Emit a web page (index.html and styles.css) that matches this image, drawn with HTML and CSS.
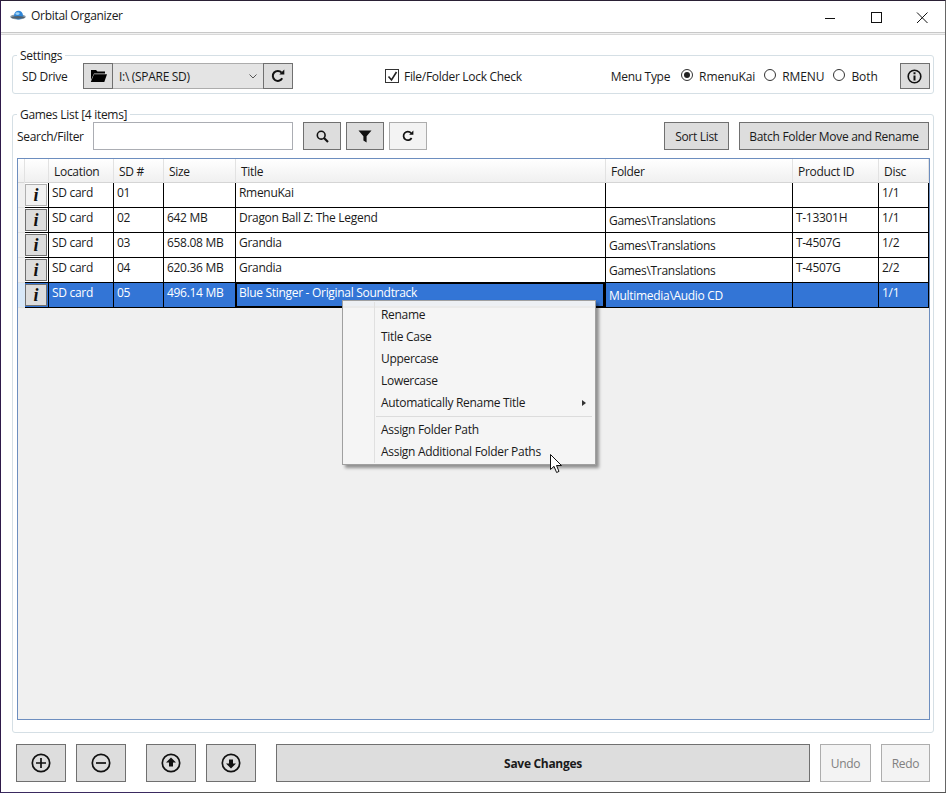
FILE: index.html
```html
<!DOCTYPE html>
<html lang="en">
<head>
<meta charset="utf-8">
<title>Orbital Organizer</title>
<link rel="stylesheet" href="styles.css">
</head>
<body>
<div class="window">
  <header class="titlebar">
    <svg class="app-icon" width="16" height="12" viewBox="0 0 16 12"><ellipse cx="8" cy="6.8" rx="7.8" ry="2.6" fill="#8a9aa8"/><circle cx="8.5" cy="5.2" r="4.4" fill="#2f86d8"/><ellipse cx="7.5" cy="3.6" rx="2.2" ry="1.3" fill="#9fd2f5"/><ellipse cx="8" cy="7.4" rx="6.8" ry="1.3" fill="#4f5f6c"/></svg>
    <span class="app-title">Orbital Organizer</span>
    <div class="caption">
      <svg width="46" height="30" viewBox="0 0 46 30"><path d="M18 16.5h10" stroke="#111" fill="none"/></svg>
      <svg width="46" height="30" viewBox="0 0 46 30"><rect x="18.5" y="10.5" width="10" height="10" stroke="#111" fill="none"/></svg>
      <svg width="46" height="30" viewBox="0 0 46 30"><path d="M18 10.5l10.5 10.5M28.5 10.5L18 21" stroke="#111" fill="none"/></svg>
    </div>
  </header>
  <div class="menu-rule"></div>

  <fieldset class="group settings">
    <legend>Settings</legend>
    <div class="settings-row">
      <span class="lbl drive-lbl">SD Drive</span>
      <button class="btn icon folder-btn"><svg width="17" height="12" viewBox="0 0 17 12"><path d="M1 0h5l1.5 1.5H15V3.5H4L1 10z" fill="#000"/><path d="M4 4.2H17L14.3 12H.8z" fill="#000"/></svg></button>
      <div class="combo"><span>I:\ (SPARE SD)</span><svg width="8" height="5" viewBox="0 0 8 5"><path d="M.5.5L4 4 7.5.5" stroke="#555" fill="none"/></svg></div>
      <button class="btn icon refresh-btn"><svg class="ico-refresh" width="14" height="14" viewBox="0 0 14 14"><path d="M11.2 9.3A5 5 0 1 1 10.6 3.6" stroke="#111" stroke-width="2" fill="none"/><path d="M8.3 5.6h5V.6z" fill="#111"/></svg></button>
      <label class="check"><span class="box"><svg width="11" height="11" viewBox="0 0 11 11"><path d="M1.5 5.5l3 3.5 5-8" stroke="#222" stroke-width="1.6" fill="none"/></svg></span>File/Folder Lock Check</label>
      <div class="menu-type">
        <span class="lbl">Menu Type</span>
        <label class="radio"><span class="dot on"></span>RmenuKai</label>
        <label class="radio"><span class="dot"></span>RMENU</label>
        <label class="radio"><span class="dot"></span>Both</label>
      </div>
      <button class="btn icon info-btn"><svg width="15" height="15" viewBox="0 0 15 15"><circle cx="7.5" cy="7.5" r="6.3" stroke="#111" stroke-width="1.6" fill="none"/><path d="M6.5 6.5h2v5h-2zM6.5 3.3h2v2h-2z" fill="#111"/></svg></button>
    </div>
  </fieldset>

  <fieldset class="group games">
    <legend>Games List [4 items]</legend>
    <div class="search-row">
      <span class="lbl">Search/Filter</span>
      <div class="input"></div>
      <button class="btn tool s1"><svg width="13" height="13" viewBox="0 0 13 13"><circle cx="5.2" cy="5.2" r="3.9" stroke="#111" stroke-width="1.6" fill="none"/><path d="M8 8l4 4" stroke="#111" stroke-width="2.1"/></svg></button>
      <button class="btn tool s2"><svg width="14" height="13" viewBox="0 0 14 13"><path d="M.5.5h13L8.6 6.3V12.5L5.4 10.5V6.3z" fill="#111"/></svg></button>
      <button class="btn tool s3 light"><svg width="12" height="12" viewBox="0 0 14 14"><path d="M11.2 9.3A5 5 0 1 1 10.6 3.6" stroke="#111" stroke-width="2" fill="none"/><path d="M8.3 5.6h5V.6z" fill="#111"/></svg></button>
      <button class="btn sort">Sort List</button>
      <button class="btn batch">Batch Folder Move and Rename</button>
    </div>

    <div class="grid">
      <div class="row head">
        <div class="rh"></div><div class="hc"></div><div class="hc">Location</div><div class="hc">SD #</div><div class="hc">Size</div><div class="hc">Title</div><div class="hc">Folder</div><div class="hc">Product ID</div><div class="hc">Disc</div>
      </div>
      <div class="row item">
        <div class="rh"></div><div class="c b"><button class="i-btn first">i</button></div><div class="c">SD card</div><div class="c">01</div><div class="c"></div><div class="c">RmenuKai</div><div class="c f"></div><div class="c"></div><div class="c">1/1</div>
      </div>
      <div class="row item">
        <div class="rh"></div><div class="c b"><button class="i-btn">i</button></div><div class="c">SD card</div><div class="c">02</div><div class="c">642 MB</div><div class="c">Dragon Ball Z: The Legend</div><div class="c f">Games\Translations</div><div class="c">T-13301H</div><div class="c">1/1</div>
      </div>
      <div class="row item">
        <div class="rh"></div><div class="c b"><button class="i-btn">i</button></div><div class="c">SD card</div><div class="c">03</div><div class="c">658.08 MB</div><div class="c">Grandia</div><div class="c f">Games\Translations</div><div class="c">T-4507G</div><div class="c">1/2</div>
      </div>
      <div class="row item">
        <div class="rh"></div><div class="c b"><button class="i-btn">i</button></div><div class="c">SD card</div><div class="c">04</div><div class="c">620.36 MB</div><div class="c">Grandia</div><div class="c f">Games\Translations</div><div class="c">T-4507G</div><div class="c">2/2</div>
      </div>
      <div class="row item sel">
        <div class="rh"></div><div class="c b"><button class="i-btn">i</button></div><div class="c">SD card</div><div class="c">05</div><div class="c">496.14 MB</div><div class="c focus">Blue Stinger - Original Soundtrack</div><div class="c f">Multimedia\Audio CD</div><div class="c"></div><div class="c">1/1</div>
      </div>
    </div>
  </fieldset>

  <footer class="bottom">
    <button class="btn round b1"><svg width="20" height="20" viewBox="0 0 20 20"><circle cx="10" cy="10" r="8.7" stroke="#111" stroke-width="1.7" fill="none"/><path d="M5 10h10M10 5v10" stroke="#111" stroke-width="1.7"/></svg></button>
    <button class="btn round b2"><svg width="20" height="20" viewBox="0 0 20 20"><circle cx="10" cy="10" r="8.7" stroke="#111" stroke-width="1.7" fill="none"/><path d="M5 10h10" stroke="#111" stroke-width="1.7"/></svg></button>
    <button class="btn round b3"><svg width="20" height="20" viewBox="0 0 20 20"><circle cx="10" cy="10" r="8.7" stroke="#111" stroke-width="1.7" fill="none"/><path d="M10 4.5l5 5h-3v4H8v-4H5z" fill="#111"/></svg></button>
    <button class="btn round b4"><svg width="20" height="20" viewBox="0 0 20 20"><circle cx="10" cy="10" r="8.7" stroke="#111" stroke-width="1.7" fill="none"/><path d="M10 15.5l5-5h-3v-4H8v4H5z" fill="#111"/></svg></button>
    <button class="btn save">Save Changes</button>
    <button class="btn off undo">Undo</button>
    <button class="btn off redo">Redo</button>
  </footer>

  <div class="ctx">
    <div class="mi">Rename</div>
    <div class="mi">Title Case</div>
    <div class="mi">Uppercase</div>
    <div class="mi">Lowercase</div>
    <div class="mi sub">Automatically Rename Title<i class="arrow"></i></div>
    <div class="sep"></div>
    <div class="mi">Assign Folder Path</div>
    <div class="mi">Assign Additional Folder Paths</div>
  </div>
  <svg class="cursor" width="13" height="20" viewBox="0 0 13 20"><path d="M.5.5V15.5L4 12.3 6.6 18.5 9 17.4 6.5 11.5H11.5z" fill="#fff" stroke="#111"/></svg>
</div>
</body>
</html>
```
FILE: styles.css
```css
* { box-sizing: border-box; }
html, body { margin: 0; padding: 0; }
body { width: 946px; height: 793px; overflow: hidden; background: #fff; font: 12px "Open Sans", "Noto Sans", sans-serif; color: #1a1a1a; }
.window { position: relative; width: 946px; height: 793px; background: #fff; border: 1px solid #666; border-left-color: #2f1a4a; border-top-color: #2a2035; border-bottom-color: #3a2a60; display: flex; flex-direction: column; letter-spacing: -0.3px; }
.window::after { content: ""; position: absolute; left: 169px; right: -1px; bottom: -1px; height: 1px; background: #555; }
.titlebar { height: 31px; display: flex; align-items: center; padding-left: 9px; flex: none; }
.app-icon { margin-right: 5px; margin-bottom: 1px; }
.app-title { font-size: 12px; margin-bottom: 2px; }
.caption { margin-left: auto; display: flex; }
.menu-rule { height: 3px; background: #f0f0f0; border-top: 1px solid #c8c8c8; border-bottom: 1px solid #d8d8d8; flex: none; }

.group { border: 1px solid #d5dfe5; border-radius: 3px; margin: 0 11px 0 11px; padding: 0; min-width: 0; }
.group legend { padding: 0 3px; margin-left: 4px; line-height: 15px; font-size: 12px; }
.settings { margin-top: 13px; height: 46px; flex: none; }
.settings-row { display: flex; align-items: center; height: 26px; padding-left: 9px; }
.drive-lbl { width: 61px; }
.btn { font: inherit; letter-spacing: inherit; color: #1a1a1a; background: #dddddd; border: 1px solid #707070; padding: 0; margin: 0; display: flex; align-items: center; justify-content: center; flex: none; }
.icon { height: 26px; }
.folder-btn { width: 30px; }
.combo { width: 150px; height: 26px; background: #e4e4e4; border-top: 1px solid #acacac; border-bottom: 1px solid #acacac; display: flex; align-items: center; justify-content: space-between; padding: 0 6px; }
.refresh-btn { width: 30px; }
.check { margin-left: 92px; display: flex; align-items: center; }
.box { width: 14px; height: 14px; border: 1px solid #333; background: #fff; display: flex; align-items: center; justify-content: center; margin-right: 5px; }
.menu-type { margin-left: 89px; display: flex; align-items: center; }
.radio { display: flex; align-items: center; margin-left: 11px; letter-spacing: -0.1px; }
.radio + .radio { margin-left: 9px; }
.dot { width: 12px; height: 12px; border: 1px solid #333; border-radius: 50%; background: #fff; margin-right: 6px; position: relative; margin-top: -2px; }
.dot.on::after { content: ""; position: absolute; left: 2px; top: 2px; width: 6px; height: 6px; border-radius: 50%; background: #222; }
.info-btn { width: 30px; margin-left: 22px; }

.games { margin-top: 13px; flex: 1; min-height: 0; }
.search-row { display: flex; align-items: center; height: 28px; padding-left: 4px; }
.search-row .lbl { width: 76px; }
.input { width: 200px; height: 28px; background: #fff; border: 1px solid #abadb3; }
.tool { width: 38px; height: 28px; }
.s1 { margin-left: 10px; }
.s2, .s3 { margin-left: 5px; }
.light { background: #f3f3f3; border-color: #adadad; }
.sort { width: 65px; height: 28px; margin-left: 237px; }
.batch { width: 190px; height: 28px; margin-left: 10px; }

.grid { margin: 8px 3px 0 4px; height: 562px; background: #f0f0f0; border: 1px solid #6d8ebf; }
.row { display: grid; grid-template-columns: 7px 24px 65px 50px 72px 370px 187px 86px 50px; }
.head { height: 24px; background: linear-gradient(#fff, #f0f0f0); border-bottom: 1px solid #d5d5d5; }
.hc { padding: 2px 0 0 5px; line-height: 22px; border-right: 1px solid #e2e2e2; white-space: nowrap; }
.item { height: 25px; }
.rh { background: #f0f0f0; border-bottom: 1px solid #e0e0e0; }
.row.head .rh { background: transparent; border-bottom: 0; border-right: 1px solid #e2e2e2; }
.c { background: #fff; border-right: 1px solid #000; border-bottom: 1px solid #000; padding: 2px 0 0 3px; line-height: 16px; white-space: nowrap; overflow: hidden; position: relative; }
.c.f { padding-top: 5px; }
.c.b { padding: 1px 0 0 0; }
.i-btn { display: block; width: 22px; height: 22px; padding: 0; background: #dddddd; border: 1px solid #707070; font: italic bold 18px/18px "Liberation Serif", serif; color: #111; text-align: center; }
.i-btn.first { background: #f2f2f2; border-color: #b0b0b0; }
.sel .c { background: #3375d6; color: #fff; }
.sel .c.b { background: #3375d6; }
.sel .rh { background: #d8e8f8; }
.c.focus { box-shadow: inset 0 0 0 1px #000; border-right: 2px solid #000; }

.bottom { position: relative; display: flex; height: 38px; margin: 11px 0 10px 15px; flex: none; }
.round { height: 38px; width: 50px; }
.b2 { margin-left: 10px; }
.b3 { margin-left: 20px; }
.b4 { margin-left: 10px; }
.save { width: 534px; height: 38px; margin-left: 20px; font-weight: 700; }
.off { height: 38px; background: #f3f3f3; border-color: #adadad; color: #808080; }
.undo { width: 51px; margin-left: 10px; }
.redo { width: 49px; margin-left: 10px; }

.ctx { position: absolute; left: 341px; top: 299px; width: 254px; height: 165px; background: rgba(245,245,245,.96); border: 1px solid #a0a0a0; box-shadow: 3px 3px 3px rgba(0,0,0,.4); padding-top: 3px; }
.ctx::before { content: ""; position: absolute; left: 31px; top: 1px; bottom: 1px; width: 1px; background: #e0e0e0; }
.mi { height: 22px; line-height: 22px; padding-left: 38px; position: relative; }
.arrow { position: absolute; right: 9px; top: 8px; border-left: 4px solid #333; border-top: 3px solid transparent; border-bottom: 3px solid transparent; }
.sep { height: 1px; background: #dcdcdc; margin: 2px 3px 2px 33px; }
.cursor { position: absolute; left: 549px; top: 453px; }
```
